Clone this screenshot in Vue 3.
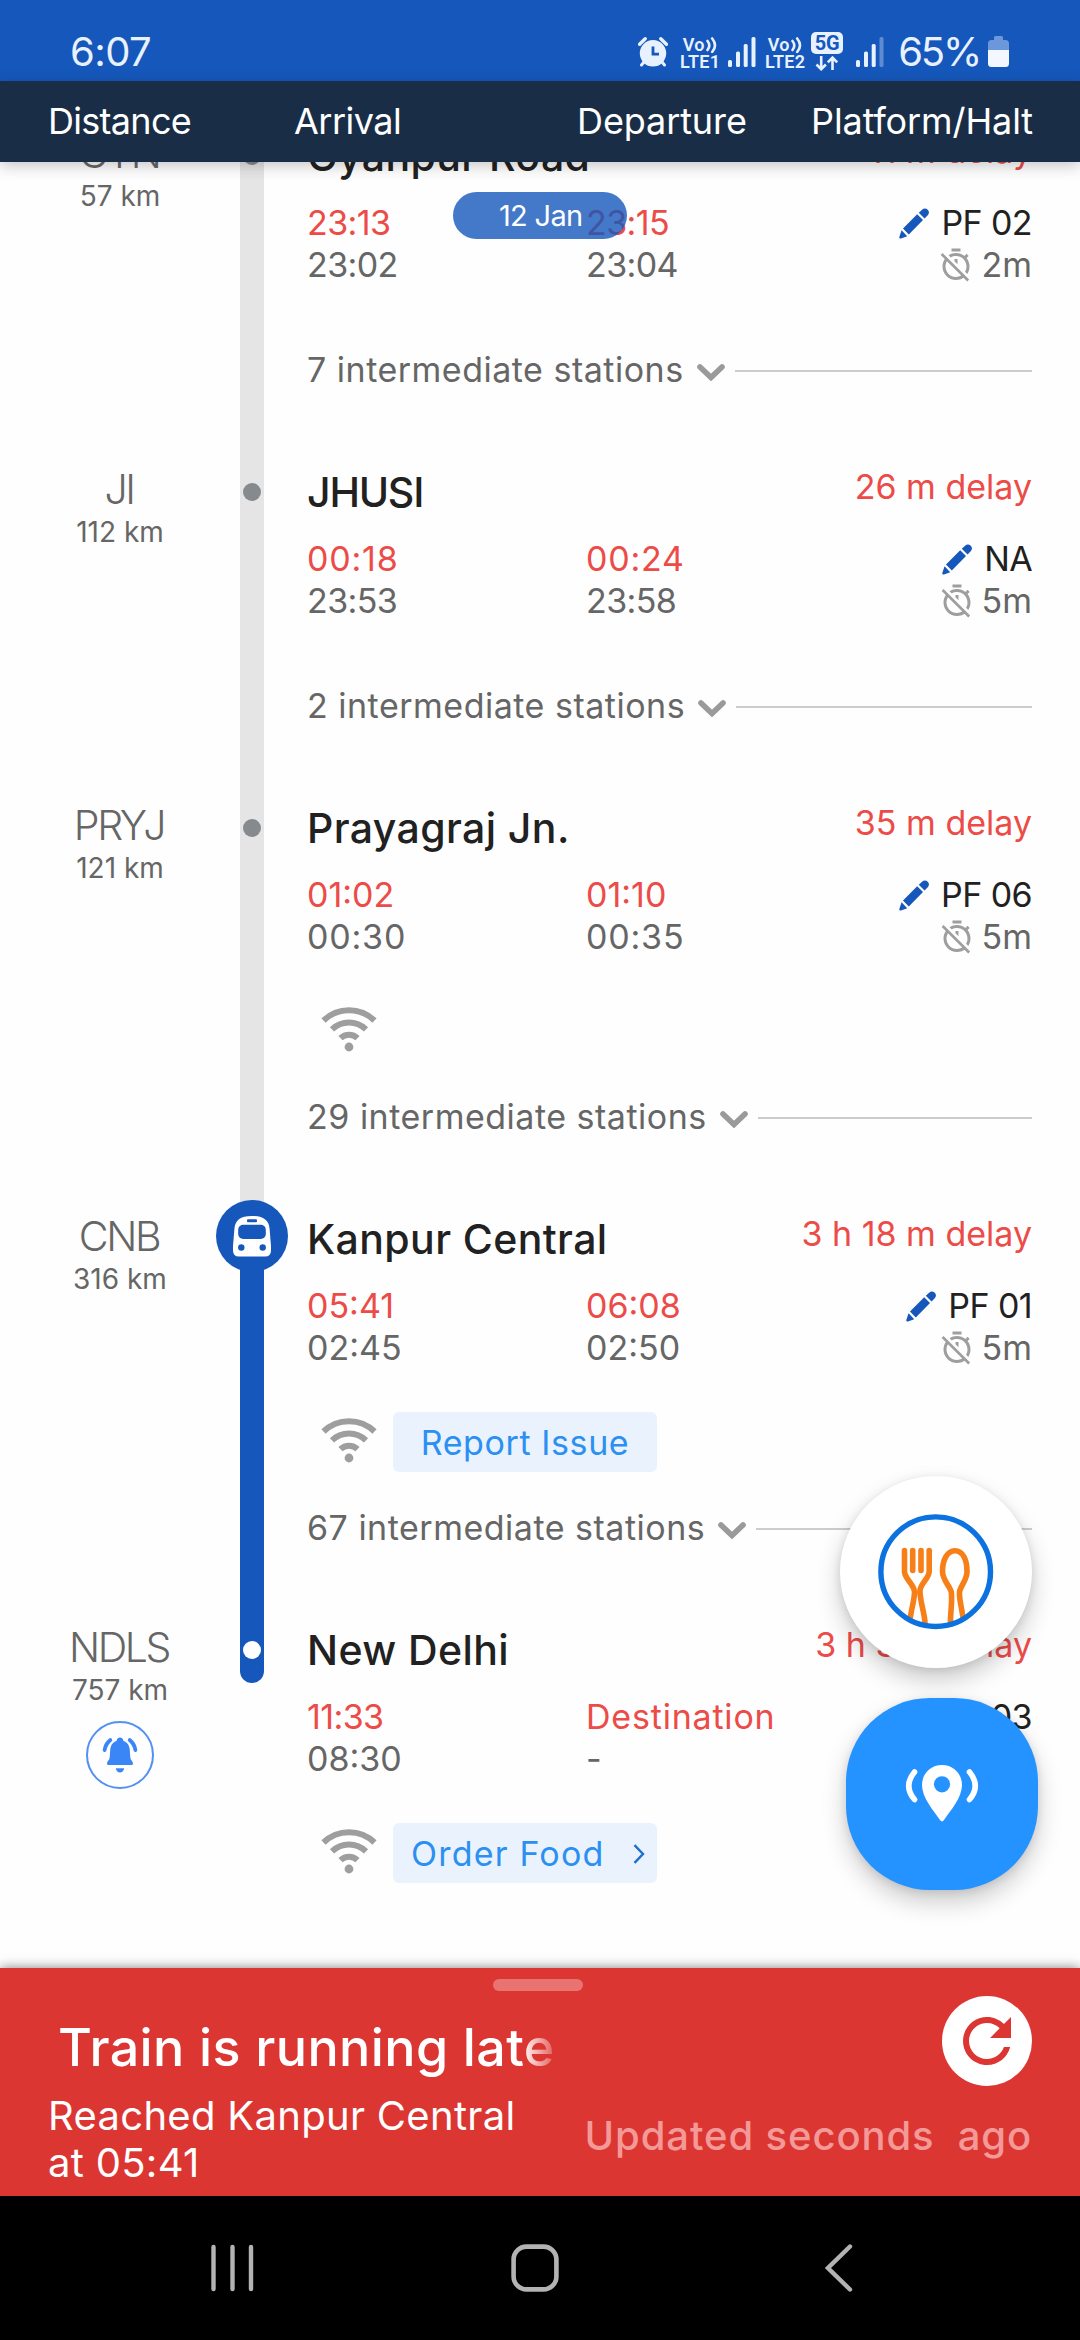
<script setup>
const columns = [
  { label: 'Distance', cls: 'c-distance' },
  { label: 'Arrival', cls: 'c-arrival' },
  { label: 'Departure', cls: 'c-departure' },
  { label: 'Platform/Halt', cls: 'c-platform' },
]

const stations = [
  { code: 'GYN', km: '57 km', name: 'Gyanpur Road', delay: '11 m delay', arr: '23:13', arrPlan: '23:02', dep: '23:15', depPlan: '23:04', pf: 'PF 02', halt: '2m', between: 7 },
  { code: 'JI', km: '112 km', name: 'JHUSI', delay: '26 m delay', arr: '00:18', arrPlan: '23:53', dep: '00:24', depPlan: '23:58', pf: 'NA', halt: '5m', between: 2 },
  { code: 'PRYJ', km: '121 km', name: 'Prayagraj Jn.', delay: '35 m delay', arr: '01:02', arrPlan: '00:30', dep: '01:10', depPlan: '00:35', pf: 'PF 06', halt: '5m', wifi: true, between: 29 },
  { code: 'CNB', km: '316 km', name: 'Kanpur Central', delay: '3 h 18 m delay', arr: '05:41', arrPlan: '02:45', dep: '06:08', depPlan: '02:50', pf: 'PF 01', halt: '5m', wifi: true, action: 'Report Issue', between: 67, current: true },
  { code: 'NDLS', km: '757 km', name: 'New Delhi', delay: '3 h 3 m delay', arr: '11:33', arrPlan: '08:30', dep: 'Destination', depPlan: '-', pf: 'PF 03', wifi: true, action: 'Order Food', arrow: true, last: true },
]

const spacing = (t) => {
  if (t.startsWith('00')) return 'wide'
  if (t === 'Destination') return 'word'
  return t.startsWith('0') ? 'normal' : 'tight'
}

const isCaps = (t) => t === t.toUpperCase()
</script>

<template>
  <div class="screen">
    <header class="status">
      <span class="clock">6:07</span>
      <div class="indicators">
        <svg class="alarm" width="30" height="30" viewBox="0 0 30 30">
          <circle cx="15" cy="16.3" r="13.2" fill="#e8f1ff" />
          <path d="M1.6 7.2 7.2 1.8M28.4 7.2 22.8 1.8" stroke="#e8f1ff" stroke-width="3.4" stroke-linecap="round" />
          <path d="M6 25 3.5 28M24 25l2.5 3" stroke="#e8f1ff" stroke-width="3" stroke-linecap="round" />
          <path d="M15 9.5v7.6h6" fill="none" stroke="#1557ba" stroke-width="2.8" />
        </svg>
        <span class="volte"><span>Vo<svg width="12" height="16" viewBox="0 0 12 16"><path d="M1.500 4q3.600 4.500 0 9M6.200 1.500q5.600 7 0 13.500" fill="none" stroke="#e8f1ff" stroke-width="2.600" stroke-linecap="round" /></svg></span><span>LTE1</span></span>
        <svg class="bars" width="28" height="30" viewBox="0 0 28 30" fill="#e8f1ff">
          <rect x="0" y="23" width="4" height="7" rx="1.500" /><rect x="8" y="14.500" width="4" height="15.500" rx="1.500" /><rect x="15.700" y="7" width="4" height="23" rx="1.500" /><rect x="23.500" y="0" width="4" height="30" rx="1.500" />
        </svg>
        <span class="volte second"><span>Vo<svg width="12" height="16" viewBox="0 0 12 16"><path d="M1.500 4q3.600 4.500 0 9M6.200 1.500q5.600 7 0 13.500" fill="none" stroke="#e8f1ff" stroke-width="2.600" stroke-linecap="round" /></svg></span><span>LTE2</span></span>
        <span class="fiveg">
          <b>5G</b>
          <svg width="24" height="15" viewBox="0 0 24 15"><path d="M6.200 0v12M1.500 8.500l4.700 4.700 4.700-4.700M17.500 14V2.500M12.800 6.300l4.700-4.700 4.700 4.700" fill="none" stroke="#e8f1ff" stroke-width="2.600" /></svg>
        </span>
        <svg class="bars dim" width="28" height="30" viewBox="0 0 28 30" fill="#e8f1ff">
          <rect x="0" y="23" width="4" height="7" rx="1.500" /><rect x="8" y="14.500" width="4" height="15.500" rx="1.500" /><rect x="15.700" y="7" width="4" height="23" rx="1.500" /><rect x="23.500" y="0" width="4" height="30" rx="1.500" opacity=".35" />
        </svg>
        <span class="percent">65%</span>
        <svg class="battery" width="21" height="31" viewBox="0 0 21 31">
          <path d="M6 1.500Q6 0 7.500 0h6Q15 0 15 1.500V4h2.500Q21 4 21 7.500V14H0V7.500Q0 4 3.500 4H6z" fill="#6d97db" />
          <path d="M0 14h21v13.500q0 3.500-3.500 3.500h-14Q0 31 0 27.500z" fill="#f3f7ff" />
        </svg>
      </div>
    </header>

    <nav class="columns">
      <span v-for="c in columns" :key="c.label" :class="c.cls">{{ c.label }}</span>
    </nav>

    <main class="timeline">
      <div class="scrolled">
        <section v-for="s in stations" :key="s.code" class="station" :class="{ tall: s.wifi, current: s.current, last: s.last }">
          <div class="distance">
            <div class="code">{{ s.code }}</div>
            <div class="km">{{ s.km }}</div>
            <div v-if="s.last" class="bell">
              <svg width="36" height="37" viewBox="0 0 36 37" fill="#3b86f7">
                <path d="M18 .5c2 0 3.300 1.300 3.300 3.200C25.500 5.200 27.500 8.500 27.800 13l.5 7.500c.1 2.500 2.700 3.700 2.700 6 0 1-.7 1.500-1.700 1.500H6.700C5.700 28 5 27.500 5 26.500c0-2.300 2.600-3.500 2.700-6l.5-7.500c.3-4.500 2.300-7.800 6.500-9.300C14.700 1.800 16 .5 18 .5zM13.800 31.300h8.400c-.4 2.600-1.900 4.200-4.200 4.200s-3.800-1.600-4.200-4.200z" />
                <path d="M8.300 3Q3.500 7 2.600 13M27.700 3q4.800 4 5.700 10" fill="none" stroke="#3b86f7" stroke-width="3.800" stroke-linecap="round" />
              </svg>
            </div>
          </div>

          <div class="track">
            <span class="before"></span>
            <span class="after"></span>
            <span v-if="s.current" class="bus">
              <svg width="38" height="41" viewBox="0 0 38 41">
                <path d="M19 0C31 0 36 4.500 36.600 13L38 30v4.500q0 6-6 6H6q-6 0-6-6V30L1.400 13C2 4.500 7 0 19 0z" fill="#fff" />
                <g fill="#1557ba"><rect x="14" y="3.200" width="10" height="3" rx="1" /><rect x="5.200" y="8.700" width="27.600" height="14.300" rx="5" /><circle cx="8.300" cy="31.500" r="3.200" /><circle cx="29.700" cy="31.500" r="3.200" /></g>
              </svg>
            </span>
            <span v-else class="dot"></span>
          </div>

          <div class="details">
            <div class="heading">
              <h2 :class="{ caps: isCaps(s.name) }">{{ s.name }}</h2>
              <span class="delay">{{ s.delay }}</span>
            </div>
            <div class="times">
              <div class="arr">
                <div class="live" :class="spacing(s.arr)">{{ s.arr }}</div>
                <div class="plan" :class="spacing(s.arrPlan)">{{ s.arrPlan }}</div>
              </div>
              <div class="dep">
                <div class="live" :class="spacing(s.dep)">{{ s.dep }}</div>
                <div class="plan" :class="spacing(s.depPlan)">{{ s.depPlan }}</div>
              </div>
              <div class="platform">
                <div class="pf">
                  <svg width="30" height="31" viewBox="0 0 30 31" fill="#1557ba">
                    <path d="M19.800 4.800 22.800 1.900Q26 -.9 28.700 1.700 31.300 4.500 28.500 7.500l-3 3zM18.200 6.300l5.800 5.800L9.800 26.500 4 20.500zM2.600 22.300 8.200 28.200 2 30.500Q0 31 .300 29z" />
                  </svg>
                  <span>{{ s.pf }}</span>
                </div>
                <div v-if="s.halt" class="halt">
                  <svg width="36" height="36" viewBox="0 0 24 24" fill="#9e9e9e">
                    <path d="M19.040 4.550l-1.420 1.420C16.070 4.740 14.120 4 12 4c-1.830 0-3.530.55-4.950 1.480l1.460 1.460C9.530 6.350 10.730 6 12 6c3.870 0 7 3.130 7 7 0 1.270-.35 2.470-.94 3.490l1.450 1.450C20.450 16.530 21 14.830 21 13c0-2.120-.74-4.070-1.970-5.610l1.420-1.420-1.410-1.420zM15 1H9v2h6V1zm-4 8.440l2 2V8h-2v1.440zM3.020 4L1.750 5.270 4.500 8.030C3.550 9.450 3 11.160 3 13c0 4.970 4.020 9 9 9 1.840 0 3.550-.55 4.980-1.500l2.500 2.500 1.270-1.270-7.710-7.710L3.020 4zM12 20c-3.870 0-7-3.130-7-7 0-1.280.35-2.480.95-3.520l9.560 9.560c-1.030.61-2.230.96-3.510.96z" />
                  </svg>
                  <span>{{ s.halt }}</span>
                </div>
              </div>
            </div>

            <div v-if="s.wifi" class="amenities">
              <svg class="wifi" width="56" height="45" viewBox="0 0 56 45" fill="none" stroke="#9e9e9e" stroke-width="6">
                <path d="M2.500 13.500a36.700 36.700 0 0 1 51 0M11 22.400a24.500 24.500 0 0 1 34 0M19.500 31.200a12.300 12.300 0 0 1 17 0" />
                <circle cx="28" cy="40" r="4.400" fill="#9e9e9e" stroke="none" />
              </svg>
              <div v-if="s.action" class="action" :class="{ arrow: s.arrow }">
                <span>{{ s.action }}</span>
                <svg v-if="s.arrow" width="12" height="20" viewBox="0 0 12 20"><path d="M1.500 1.200 10 10 1.500 18.800" fill="none" stroke="#1d6fd0" stroke-width="2.400" /></svg>
              </div>
            </div>

            <div v-if="s.between" class="between">
              <span>{{ s.between }} intermediate stations</span>
              <svg width="28" height="17" viewBox="0 0 28 17"><path d="M3 3l11 10.500L25 3" fill="none" stroke="#9a9a9a" stroke-width="5.600" stroke-linecap="round" /></svg>
              <i></i>
            </div>
          </div>
        </section>
      </div>
      <div class="date">12 Jan</div>

      <div class="fabs">
        <div class="fab food">
          <svg width="116" height="116" viewBox="0 0 116 116" fill="none">
            <g stroke="#f77f17" stroke-width="5.600" stroke-linecap="round" stroke-linejoin="round">
              <path d="M34.700 36.500v20M43 36.500v20M26.500 36.500V58C27 65 36.500 71 36.500 78 36.500 86 33.500 94 32.500 103M51.200 36.500V58C50.500 65 42 70 42 77c0 10 4 20 5 31" />
              <path d="M72.500 107c0-10 2-20 .8-29-1.500-6-8.800-12-8.800-20.500C64.500 46 69 36.700 77 36.700S89 46 89 57.500C89 66 82.500 72 81.500 78c-.5 8 2.500 16 3.500 26" />
            </g>
            <circle cx="57.700" cy="57.700" r="54.800" stroke="#0b72df" stroke-width="5.400" />
          </svg>
        </div>
        <div class="fab locate">
          <svg width="74" height="58" viewBox="0 0 74 58">
            <path d="M37 0C48.500 0 57 8.800 57 20 57 33 45 46 39 55Q37 57.800 35 55C29 46 17 33 17 20 17 8.800 25.500 0 37 0z" fill="#fff" />
            <circle cx="37" cy="19.300" r="8.100" fill="#2492ff" />
            <path d="M9.500 7Q-2 21 9.500 34.500M64.500 7Q76 21 64.500 34.500" fill="none" stroke="#fff" stroke-width="5.600" stroke-linecap="round" />
          </svg>
        </div>
      </div>
    </main>

    <section class="sheet">
      <span class="handle"></span>
      <div class="top">
        <div class="title">Train is running late</div>
        <div class="refresh">
          <svg width="72" height="72" viewBox="0 0 24 24" fill="#dc3633"><path d="M17.650 6.350C16.200 4.900 14.210 4 12 4c-4.420 0-7.990 3.580-7.990 8s3.570 8 7.990 8c3.730 0 6.840-2.550 7.730-6h-2.080c-.82 2.330-3.040 4-5.650 4-3.310 0-6-2.690-6-6s2.690-6 6-6c1.660 0 3.140.69 4.220 1.780L13 11h7V4l-2.350 2.350z" /></svg>
        </div>
      </div>
      <div class="bottom">
        <p>Reached Kanpur Central<br />at 05:41</p>
        <span class="updated">Updated seconds&nbsp; ago</span>
      </div>
    </section>

    <footer class="keys">
      <svg class="recents" width="43" height="48" viewBox="0 0 43 48" stroke="#b3b3b3" stroke-width="4.400" stroke-linecap="round"><path d="M2.500 3v42M21.500 3v42M40 3v42" /></svg>
      <svg class="home" width="48" height="48" viewBox="0 0 48 48"><rect x="2.600" y="2.600" width="42.800" height="42.800" rx="13" fill="none" stroke="#b3b3b3" stroke-width="4.600" /></svg>
      <svg class="back" width="28" height="48" viewBox="0 0 28 48"><path d="M25 2.500 3 24l22 21.500" fill="none" stroke="#b3b3b3" stroke-width="4.400" stroke-linecap="round" /></svg>
    </footer>
  </div>
</template>

<style>
body { background: #fff; }
</style>

<style scoped>
.screen { width: 1080px; height: 2340px; display: flex; flex-direction: column; overflow: hidden; background: #fefefe; font-family: Inter, Roboto, sans-serif; font-size: 34px; line-height: 42px; color: #666; white-space: nowrap; }
.screen svg { display: block; flex: none; }

.status { flex: none; height: 81px; background: #1557ba; color: #e8f1ff; display: flex; justify-content: space-between; padding: 0 71px 0 70px; }
.clock, .percent { font-size: 40px; line-height: 50px; padding-top: 27px; letter-spacing: -.6px; }
.indicators { display: flex; align-items: flex-start; }
.alarm { margin-top: 37px; }
.volte { display: flex; flex-direction: column; align-items: center; width: 38px; margin: 36px 0 0 13px; font: 600 18px/18px Roboto, sans-serif; letter-spacing: .3px; }
.volte span { display: flex; align-items: center; gap: 1px; height: 17px; }
.bars { margin: 37px 0 0 9px; }
.volte.second { margin-left: 9px; width: 40px; }
.fiveg { display: flex; flex-direction: column; align-items: center; gap: 2px; width: 32px; margin: 32px 0 0 6px; }
.fiveg b { width: 32px; height: 22px; border-radius: 5px; background: #e8f1ff; color: #1557ba; font: 700 20px/22px Roboto, sans-serif; text-align: center; }
.bars.dim { margin-left: 13px; }
.percent { margin-left: 14px; letter-spacing: -2.200px; }
.battery { margin: 36px 0 0 8px; }

.columns { position: relative; z-index: 2; flex: none; height: 81px; background: #192e46; color: #fff; font-size: 36px; line-height: 81px; display: grid; grid-template-columns: 246px 283px 232px 1fr; padding: 0 47px 0 48px; box-shadow: 0 4px 14px rgba(0, 0, 0, .22); }
.c-distance { letter-spacing: -.7px; }
.c-arrival { letter-spacing: -.5px; }
.c-departure { letter-spacing: -.1px; }
.c-platform { text-align: right; letter-spacing: -.1px; }

.timeline { position: relative; flex: none; height: 1806px; overflow: hidden; }
.scrolled { margin-top: -40px; }
.station { display: grid; grid-template-columns: 240px 24px 768px; height: 336px; }
.station.tall { height: 411px; }

.distance { display: flex; flex-direction: column; align-items: center; padding-top: 9px; }
.code { font-size: 41px; line-height: 44px; font-weight: 350; letter-spacing: -2.400px; margin-left: -2px; }
.km { font-size: 28px; line-height: 34px; margin-top: 4px; }
.bell { width: 68px; height: 68px; margin-top: 14px; border: 2px solid #5291f1; border-radius: 50%; box-sizing: border-box; display: flex; align-items: center; justify-content: center; }

.track { position: relative; display: flex; flex-direction: column; }
.before, .after { width: 24px; background: #e5e5e5; }
.before { height: 34px; }
.after { flex: 1; }
.current .after, .last .before, .last .after { background: #1557ba; }
.last .after { flex: none; height: 33px; border-radius: 0 0 12px 12px; }
.dot { position: absolute; left: 3px; top: 25px; width: 18px; height: 18px; border-radius: 50%; background: #868a8f; }
.last .dot { background: #fff; }
.bus { position: absolute; left: -24px; top: -5px; width: 72px; height: 72px; border-radius: 50%; background: #1557ba; display: flex; align-items: center; justify-content: center; }

.details { padding-left: 43px; }
.heading { display: flex; justify-content: space-between; height: 72px; padding-top: 8px; }
h2 { margin: 2px 0 0; font-size: 41px; line-height: 48px; font-weight: 500; color: #212121; letter-spacing: .4px; }
h2.caps { letter-spacing: -1.200px; }
.delay { color: #ec4b48; }
.times { display: grid; grid-template-columns: 279px 1fr auto; height: 84px; }
.live { color: #ec4b48; }
.wide { letter-spacing: .8px; }
.normal { letter-spacing: 0; }
.tight { letter-spacing: -.6px; }
.word { letter-spacing: .8px; }
.platform { display: flex; flex-direction: column; align-items: flex-end; }
.pf, .halt { display: flex; align-items: center; height: 42px; }
.pf { gap: 12px; color: #212121; letter-spacing: -.6px; }
.halt { gap: 7px; letter-spacing: 0; }

.amenities { display: flex; align-items: center; height: 60px; margin: 43px 0 34px; padding-left: 14px; }
.wifi { margin-bottom: 3px; }
.action { margin-left: 16px; width: 264px; height: 60px; border-radius: 6px; background: #eaf3fd; color: #2c90f3; display: flex; align-items: center; justify-content: center; letter-spacing: .6px; line-height: 44px; box-sizing: border-box; padding-top: 1px; }
.action.arrow { justify-content: space-between; padding: 1px 12px 0 18px; letter-spacing: 1.200px; }

.between { display: flex; align-items: center; height: 44px; letter-spacing: .5px; }
.times + .between { margin-top: 62px; }
.between svg { margin: 4px 0 0 13px; }
.between i { flex: 1; height: 2px; margin-left: 10px; margin-top: 2px; background: #ccc; }

.date { position: absolute; left: 453px; top: 30px; width: 174px; height: 47px; border-radius: 24px; box-sizing: border-box; padding-left: 46px; background: rgba(21, 86, 186, .8); color: #fff; font-size: 29px; line-height: 47px; letter-spacing: -.7px; }

.fabs { position: absolute; right: 42px; bottom: 78px; display: flex; flex-direction: column; align-items: flex-end; gap: 30px; }
.fab { width: 192px; height: 192px; display: flex; align-items: center; justify-content: center; box-shadow: 0 12px 24px rgba(0, 0, 0, .2), 0 2px 8px rgba(0, 0, 0, .1); }
.food { margin-right: 6px; border-radius: 50%; background: #fff; }
.locate { border-radius: 84px; background: #2492ff; }
.locate svg { margin-bottom: 1px; }

.sheet { position: relative; flex: none; height: 228px; background: #dc3633; color: #fff; box-shadow: 0 0 11px rgba(0, 0, 0, .5); display: flex; flex-direction: column; padding: 0 48px; }
.handle { align-self: center; width: 90px; height: 12px; margin: 11px 4px 0 0; border-radius: 6px; background: #e87371; flex: none; }
.top { display: flex; justify-content: space-between; height: 95px; padding-top: 5px; box-sizing: border-box; }
.title { margin-left: 10px; padding-top: 20px; height: 67px; font-size: 52px; line-height: 64px; font-weight: 500; letter-spacing: .4px; -webkit-mask-image: linear-gradient(90deg, #000 464px, transparent 505px); mask-image: linear-gradient(90deg, #000 464px, transparent 505px); }
.refresh { width: 90px; height: 90px; border-radius: 50%; background: #fff; display: flex; align-items: center; justify-content: center; }
.bottom { display: flex; justify-content: space-between; font-size: 40px; line-height: 47px; }
p { margin: 6px 0 0; letter-spacing: .3px; }
.updated { margin-top: 26px; font-weight: 500; letter-spacing: .9px; color: #f39a98; }

.keys { flex: none; height: 144px; background: #000; display: flex; align-items: center; padding-left: 211px; }
.home { margin-left: 257px; }
.back { margin-left: 266px; }
</style>
